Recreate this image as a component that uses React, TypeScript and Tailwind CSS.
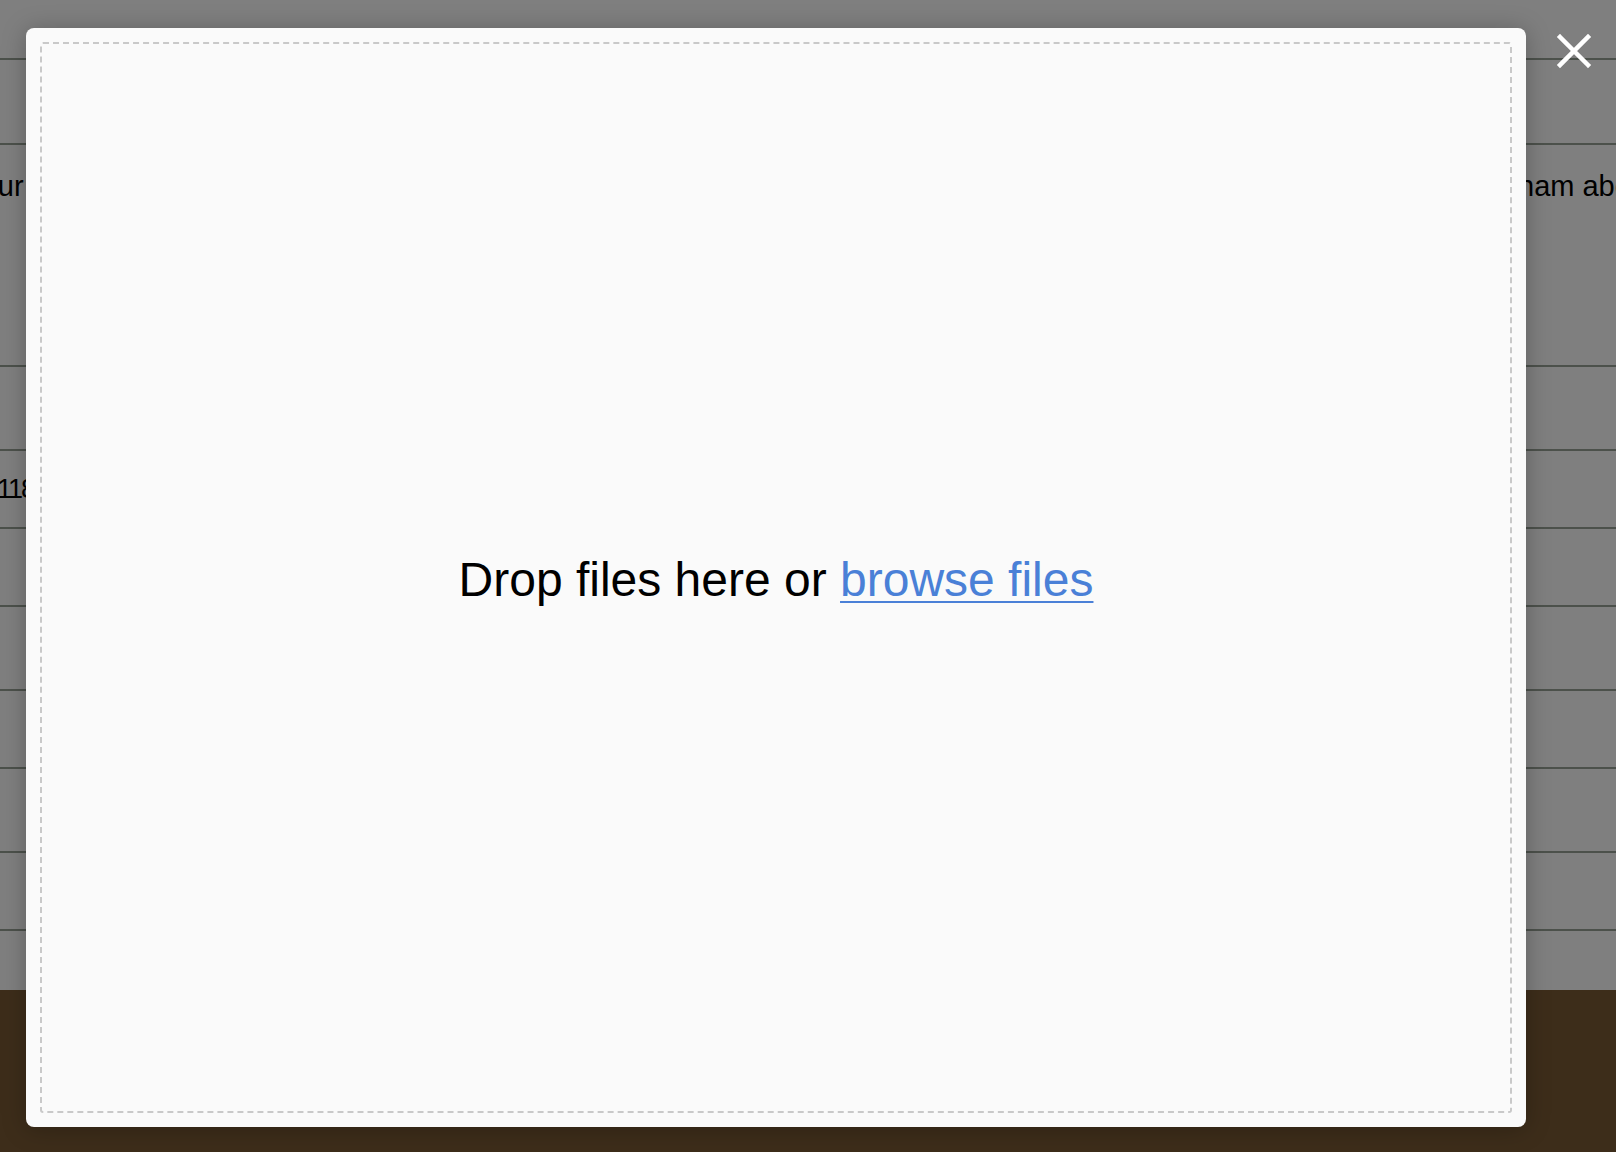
export default function App() {
  return (
    <div className="relative h-[1152px] w-[1616px] overflow-hidden bg-white font-['Liberation_Sans',Arial,sans-serif] text-black">
      {/* page behind the dialog */}
      <div className="flex h-full flex-col">
        <div className="h-[60px] border-b-2 border-[#98a397]" />
        <div className="h-[85px] border-b-2 border-[#98a397]" />
        <div className="flex h-[222px] whitespace-nowrap border-b-2 border-[#98a397] pt-5 text-[29px]">
          <div className="w-[1518px] shrink-0 pl-[3px]">
            <span className="-ml-[38px]">Your</span>
          </div>
          <div className="shrink-0">nam about</div>
        </div>
        <div className="h-[84px] border-b-2 border-[#98a397]" />
        <div className="flex h-[78px] items-center whitespace-nowrap border-b-2 border-[#98a397] text-[27px] tracking-[-2px]">
          <span className="-ml-[3px]">118</span>
        </div>
        <div className="h-[78px] border-b-2 border-[#98a397]" />
        <div className="h-[84px] border-b-2 border-[#98a397]" />
        <div className="h-[78px] border-b-2 border-[#98a397]" />
        <div className="h-[84px] border-b-2 border-[#98a397]" />
        <div className="h-[78px] border-b-2 border-[#98a397]" />
        <div className="h-[59px]" />
        <div className="flex-1 bg-[#7a5a34]" />
      </div>

      {/* overlay */}
      <div className="absolute inset-0 bg-black/50" />

      {/* upload dialog */}
      <div className="absolute left-[26px] top-[28px] h-[1099px] w-[1500px] rounded-[8px] bg-[#fafafa] p-[14px] shadow-[0_2px_24px_rgba(0,0,0,0.25)]">
        <div className="flex h-full w-full items-center justify-center rounded-[3px] border-2 border-dashed border-[#c9c9c9]">
          <p className="mt-[4px] text-[48px] leading-none">
            Drop files here or{' '}
            <button className="cursor-pointer text-[#4a80d7] underline decoration-2 underline-offset-[5px]">
              browse files
            </button>
          </p>
        </div>
      </div>

      <button className="absolute left-[1556px] top-[33px] h-9 w-9 text-white" aria-label="Close">
        <svg viewBox="0 0 36 36" className="h-9 w-9" fill="none" stroke="currentColor" strokeWidth="4.5" strokeLinecap="square">
          <path d="M4 4 32 32M32 4 4 32" />
        </svg>
      </button>
    </div>
  );
}
